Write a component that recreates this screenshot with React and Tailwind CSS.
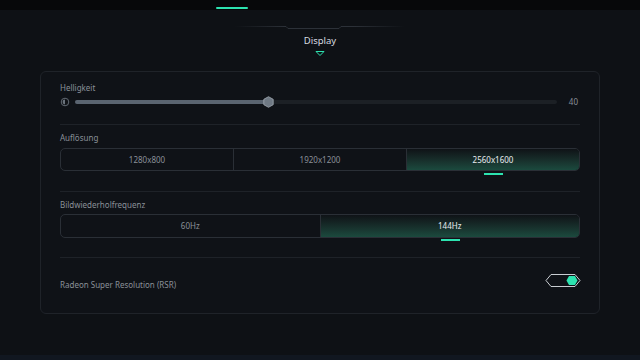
import React from "react";

const font = { fontFamily: '"Noto Sans", "Liberation Sans", sans-serif' };

function Segmented({ items, selected, h }) {
  return (
    <div className={`flex w-full ${h} rounded-[5px] border border-[#2a2f36] overflow-hidden`}>
      {items.map((it, i) => {
        const sel = i === selected;
        return (
          <div
            key={it}
            className={`flex-1 flex items-center justify-center text-[8px] ${
              i > 0 ? "border-l border-[#2a2f36]" : ""
            } ${sel ? "text-[#e8ecef] bg-gradient-to-b from-[#0f1317] to-[#1b4a3e]" : "text-[#8a9098]"}`}
          >
            {it}
          </div>
        );
      })}
    </div>
  );
}

function Indicator({ items, selected }) {
  return (
    <div className="flex w-full">
      {items.map((it, i) => (
        <div key={it} className="flex-1 flex justify-center">
          {i === selected ? <div className="w-[19px] h-[2px] bg-[#2de3b0]" /> : null}
        </div>
      ))}
    </div>
  );
}

export default function App() {
  return (
    <div style={font} className="w-[640px] h-[360px] bg-[#0e1115] flex flex-col overflow-hidden">
      <div className="h-[10px] bg-[#07080a] flex items-end">
        <div className="ml-[216px] mb-[1px] w-[32px] h-[2px] bg-[#2de3b0] rounded-full" />
      </div>
      <div className="relative h-[61px] flex flex-col items-center">
        <svg width="170" height="34" viewBox="0 0 170 34" className="mt-[15px]">
          <defs>
            <linearGradient id="lg" x1="0" x2="1">
              <stop offset="0" stopColor="#2c3138" stopOpacity="0" />
              <stop offset="0.3" stopColor="#2c3138" />
              <stop offset="0.7" stopColor="#2c3138" />
              <stop offset="1" stopColor="#2c3138" stopOpacity="0" />
            </linearGradient>
          </defs>
          <path d="M0 1.5 H51 L53 3.5 H104 L106 1.5 H170" stroke="url(#lg)" strokeWidth="1" fill="none" />
          <path d="M0 29.5 H170" stroke="url(#lg)" strokeWidth="1" fill="none" />
          <path d="M81 26.5 H89 L85 30.5 Z" stroke="#2de3b0" strokeWidth="1" fill="#0e1115" />
        </svg>
        <div className="absolute top-[24px] left-0 right-0 text-center text-[9.5px] leading-[14px] text-[#d8dce0]">Display</div>
      </div>
      <div className="mx-[40px] h-[243px] rounded-[6px] border border-[#1f2329] bg-[#0f1217] px-[19px] flex flex-col">
        <div className="h-[52px] pt-[11px] flex flex-col">
          <div className="h-[10px] leading-[10px] text-[8px] text-[#8a9098]">Helligkeit</div>
          <div className="mt-[4px] h-[10px] flex items-center">
            <svg width="10" height="10" viewBox="0 0 10 10">
              <circle cx="5" cy="5" r="3.8" stroke="#6b737c" strokeWidth="0.9" fill="none" />
              <path d="M5 2.6 A2.4 2.4 0 0 0 5 7.4 Z" fill="#6b737c" />
            </svg>
            <div className="ml-[5px] w-[482px] h-[4px] rounded-full bg-[#1c2025] relative">
              <div className="absolute left-0 top-0 h-[4px] w-[193px] rounded-full bg-[#5a6470]" />
              <svg width="11" height="12" viewBox="0 0 11 12" className="absolute left-[188px] top-[-4px]">
                <path d="M5.5 0.7 L10.2 3.3 V8.7 L5.5 11.3 L0.8 8.7 V3.3 Z" fill="#6f7984" stroke="#a3abb4" strokeWidth="0.8" />
              </svg>
            </div>
            <div className="ml-auto text-[8px] text-[#8a9098] pr-[2px]">40</div>
          </div>
        </div>
        <div className="h-px bg-[#1e2228]" />
        <div className="h-[66px] pt-[8px] flex flex-col">
          <div className="h-[10px] leading-[10px] text-[8px] text-[#8a9098]">Auflösung</div>
          <div className="mt-[5px]">
            <Segmented items={["1280x800", "1920x1200", "2560x1600"]} selected={2} h="h-[23px]" />
          </div>
          <div className="mt-[2px]">
            <Indicator items={["1280x800", "1920x1200", "2560x1600"]} selected={2} />
          </div>
        </div>
        <div className="h-px bg-[#1e2228]" />
        <div className="h-[65px] pt-[8px] flex flex-col">
          <div className="h-[10px] leading-[10px] text-[8px] text-[#8a9098]">Bildwiederholfrequenz</div>
          <div className="mt-[4px]">
            <Segmented items={["60Hz", "144Hz"]} selected={1} h="h-[24px]" />
          </div>
          <div className="mt-[1px]">
            <Indicator items={["60Hz", "144Hz"]} selected={1} />
          </div>
        </div>
        <div className="h-px bg-[#1e2228]" />
        <div className="flex-1 flex items-center justify-between pb-[3px]">
          <div className="text-[8px] text-[#8a9098] mt-[1px]">Radeon Super Resolution (RSR)</div>
          <svg width="36" height="15" viewBox="0 0 36 15" className="mr-[-1px] mt-[-8px]">
            <path d="M1 7.5 L6 1.5 H30 L35 7.5 L30 13.5 H6 Z" stroke="#c9cdd2" strokeWidth="1" fill="#0f1217" />
            <path d="M24 3 H30 L32.5 7.5 L30 12 H24 L21.5 7.5 Z" fill="#2de3b0" />
          </svg>
        </div>
      </div>
      <div className="flex-1" />
      <div className="h-[5px] bg-[#111720]" />
    </div>
  );
}
